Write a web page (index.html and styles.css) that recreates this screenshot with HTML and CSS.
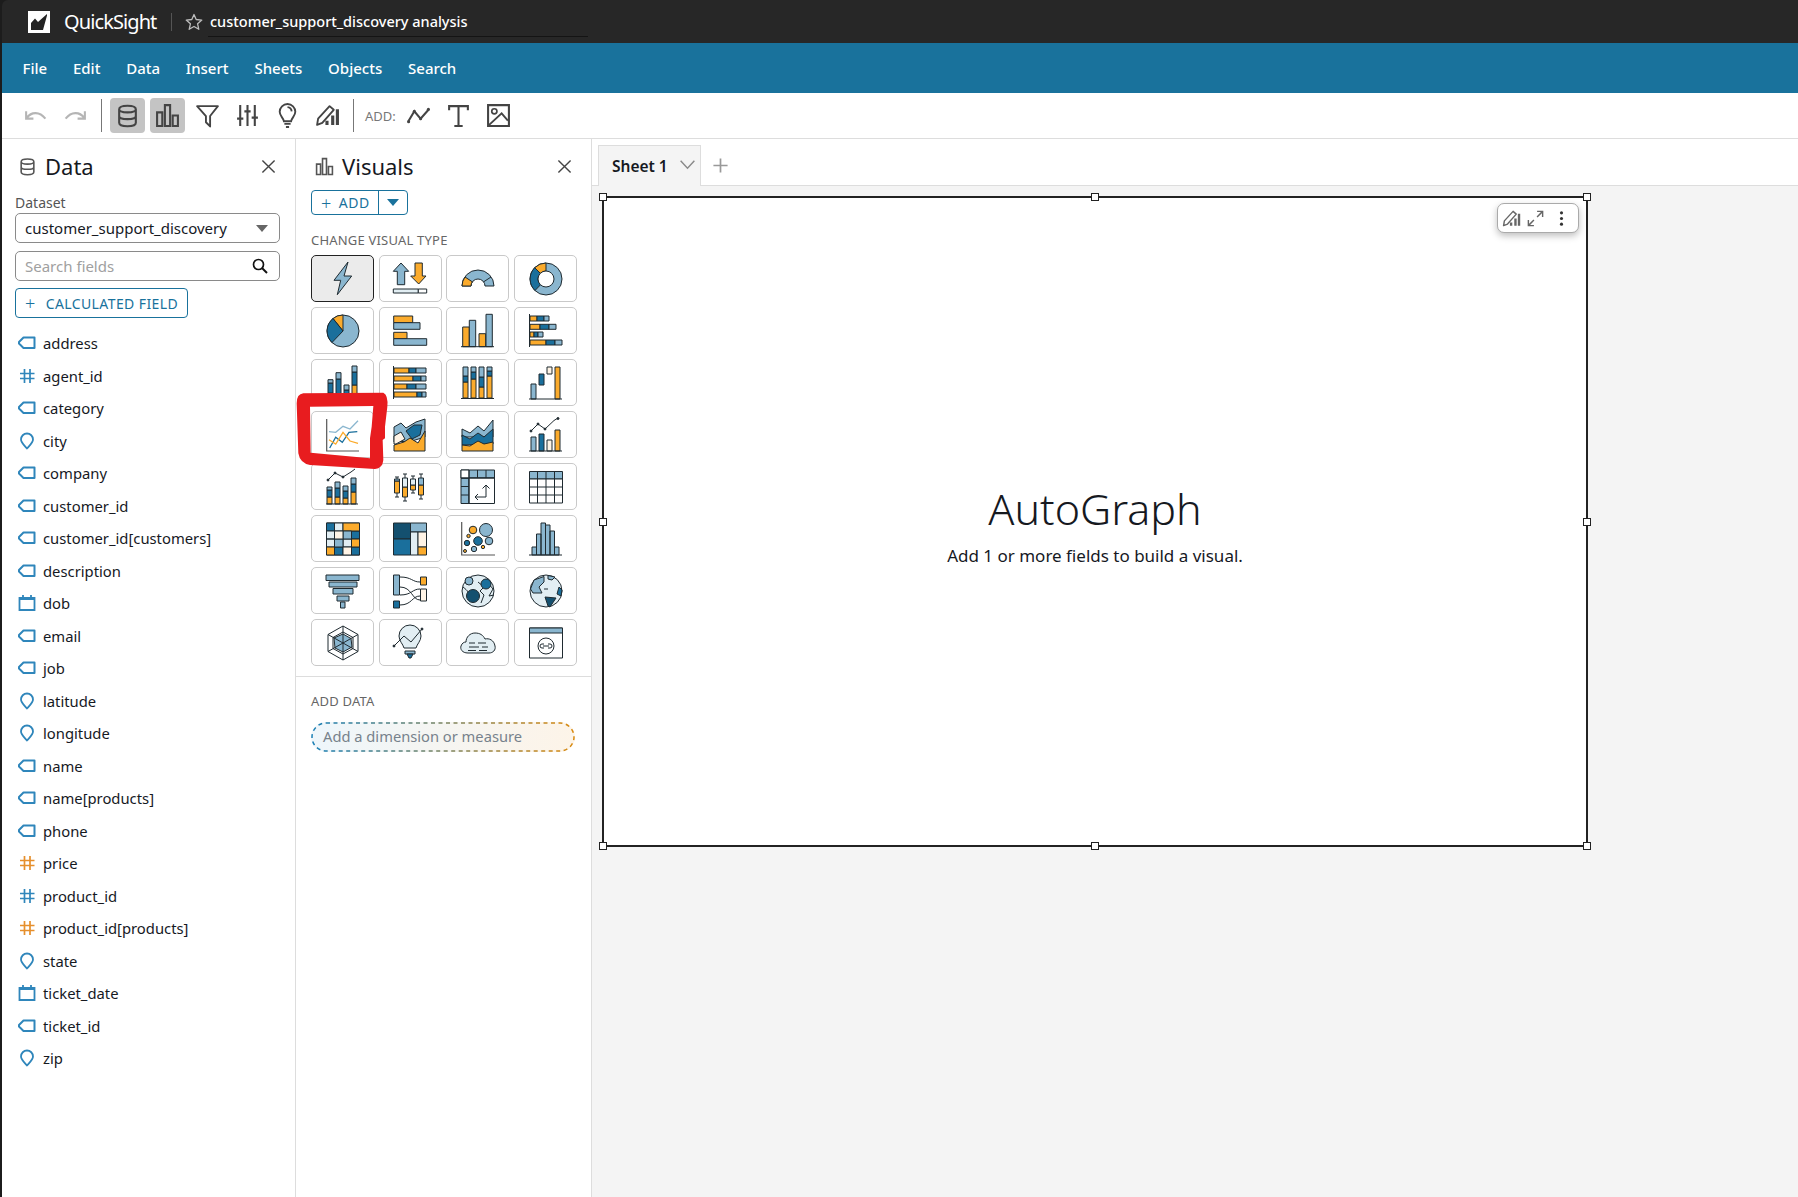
FILE: index.html
```html
<!DOCTYPE html>
<html lang="en">
<head>
<meta charset="utf-8">
<title>QuickSight</title>
<link rel="stylesheet" href="styles.css">
</head>
<body>
<svg class="defs" width="0" height="0" aria-hidden="true">
  <defs><linearGradient id="wellgrad" x1="0" x2="1" y1="0" y2="0"><stop offset="0" stop-color="#1a7fb5"/><stop offset="1" stop-color="#d98a10"/></linearGradient></defs>
  <symbol id="f-tag" viewBox="0 0 18 18"><path d="M5.5 3.5H16.5V14H5.5L1 9.5V8Z" fill="none" stroke="currentColor" stroke-width="2" stroke-linejoin="round"/></symbol>
  <symbol id="f-hash" viewBox="0 0 18 18"><path d="M6.5 2V16M12 2V16M2 6.5H16.5M2 11.5H16.5" fill="none" stroke="currentColor" stroke-width="1.7"/></symbol>
  <symbol id="f-pin" viewBox="0 0 18 18"><path d="M9 16.5C5.5 12.5 3 10.500 3 7.500A6 6 0 0 1 15 7.500C15 10.500 12.500 12.500 9 16.500Z" fill="none" stroke="currentColor" stroke-width="1.800" stroke-linejoin="round"/></symbol>
  <symbol id="f-cal" viewBox="0 0 18 18"><path d="M1.500 4H16.500V16H1.500ZM5 1V4M13 1V4M1.500 5H16.500" fill="none" stroke="currentColor" stroke-width="1.800"/></symbol>
  <symbol id="t-db" viewBox="0 0 24 24"><path d="M4 6C4 1.500 20 1.500 20 6V19C20 23.500 4 23.500 4 19ZM4 6C4 10 20 10 20 6M4 12.500C4 16.500 20 16.500 20 12.500" fill="none" stroke="currentColor" stroke-width="2"/></symbol>
  <symbol id="t-bars" viewBox="0 0 24 24"><path d="M2 9H7V22H2ZM9.500 2H14.500V22H9.500ZM17 12H22V22H17Z" fill="none" stroke="currentColor" stroke-width="2"/></symbol>
  <symbol id="t-design" viewBox="0 0 24 24"><path d="M2 21L3 15L14 3L18 6.500L7 19Z" fill="none" stroke="currentColor" stroke-width="1.800" stroke-linejoin="round"/><path d="M10 21H13V17H10ZM15.500 21H18.500V12H15.500ZM20 21H23V6H20Z" fill="currentColor"/></symbol>
</svg>

<div class="app">
  <header class="topbar">
    <svg class="logo" viewBox="0 0 22 22"><path fill="#fff" d="M0 0H22V22H0Z"/><path fill="#232323" d="M3 19V12L7 7.500L10 11L19 3V4.500L15 19Z"/></svg>
    <span class="brand">QuickSight</span>
    <span class="vsep"></span>
    <svg class="star" viewBox="0 0 18 18"><path d="M9 1.500L11.200 6.500L16.800 7.100L12.600 10.800L13.800 16.300L9 13.500L4.200 16.300L5.400 10.800L1.200 7.100L6.800 6.500Z" fill="none" stroke="#bdbdbd" stroke-width="1.300" stroke-linejoin="round"/></svg>
    <div class="doc-title">customer_support_discovery analysis</div>
  </header>

  <nav class="menubar">
    <span>File</span><span>Edit</span><span>Data</span><span>Insert</span><span>Sheets</span><span>Objects</span><span>Search</span>
  </nav>

  <div class="toolbar">
    <span class="tb muted"><svg viewBox="0 0 24 24"><path d="M3 8V15H10M3.500 14.500C8 8 16 8 21.500 15" fill="none" stroke="currentColor" stroke-width="2"/></svg></span>
    <span class="tb muted"><svg viewBox="0 0 24 24"><path d="M21 8V15H14M20.500 14.500C16 8 8 8 2.500 15" fill="none" stroke="currentColor" stroke-width="2"/></svg></span>
    <span class="tsep"></span>
    <span class="tb on"><svg viewBox="0 0 24 24"><use href="#t-db"/></svg></span>
    <span class="tb on"><svg viewBox="0 0 24 24"><use href="#t-bars"/></svg></span>
    <span class="tb"><svg viewBox="0 0 24 24"><path d="M2 3H22L14.500 12.500V22.500L10.500 18.500V12.500Z" fill="none" stroke="currentColor" stroke-width="1.800" stroke-linejoin="round"/></svg></span>
    <span class="tb"><svg viewBox="0 0 24 24"><path d="M5 2V22M12 2V22M19 2V22M2 15H8M9 8H15M16 14H22" fill="none" stroke="currentColor" stroke-width="2"/></svg></span>
    <span class="tb"><svg viewBox="0 0 24 24"><path d="M8.500 17.500C8 14 4.500 12.500 4.500 8.500A7.500 7.500 0 0 1 19.500 8.500C19.500 12.500 16 14 15.500 17.500ZM9 20H15M10.500 23H13.500M12 4A4.500 4.500 0 0 1 16 8" fill="none" stroke="currentColor" stroke-width="1.800"/></svg></span>
    <span class="tb"><svg viewBox="0 0 24 24"><use href="#t-design"/></svg></span>
    <span class="tsep"></span>
    <span class="addlabel">ADD:</span>
    <span class="tb"><svg viewBox="0 0 24 24"><path d="M2 18L8 8L14 15L22 6" fill="none" stroke="currentColor" stroke-width="2"/><circle cx="2.500" cy="18" r="1.500" fill="currentColor"/><circle cx="8" cy="8" r="1.500" fill="currentColor"/><circle cx="14" cy="15" r="1.500" fill="currentColor"/><circle cx="21.500" cy="6" r="1.500" fill="currentColor"/></svg></span>
    <span class="tb"><svg viewBox="0 0 24 24"><path d="M3 7V3H21V7M12 3V22M8 22H16" fill="none" stroke="currentColor" stroke-width="2"/></svg></span>
    <span class="tb"><svg viewBox="0 0 24 24"><path d="M2 2H22V22H2Z" fill="none" stroke="currentColor" stroke-width="2"/><circle cx="8" cy="8" r="2.500" fill="none" stroke="currentColor" stroke-width="1.600"/><path d="M3 21L15 10L21 17" fill="none" stroke="currentColor" stroke-width="1.800"/></svg></span>
  </div>

  <main class="workspace">
    <aside class="panel data">
      <div class="panel-head">
        <svg class="head-icon" viewBox="0 0 24 24"><use href="#t-db"/></svg>
        <h2>Data</h2>
        <svg class="close" viewBox="0 0 16 16"><path d="M1.500 1.500L14.500 14.500M14.500 1.500L1.500 14.500" stroke="currentColor" stroke-width="1.500"/></svg>
      </div>
      <label class="ds-label">Dataset</label>
      <div class="select"><span>customer_support_discovery</span><i class="caret"></i></div>
      <div class="search"><span>Search fields</span>
        <svg viewBox="0 0 16 16"><circle cx="6.500" cy="6.500" r="5" fill="none" stroke="#111" stroke-width="1.700"/><path d="M10 10L15 15" stroke="#111" stroke-width="2"/></svg>
      </div>
      <div class="calc"><span class="plus">+</span>CALCULATED FIELD</div>
      <ul class="fields">
        <li><svg><use href="#f-tag"/></svg>address</li>
        <li><svg><use href="#f-hash"/></svg>agent_id</li>
        <li><svg><use href="#f-tag"/></svg>category</li>
        <li><svg><use href="#f-pin"/></svg>city</li>
        <li><svg><use href="#f-tag"/></svg>company</li>
        <li><svg><use href="#f-tag"/></svg>customer_id</li>
        <li><svg><use href="#f-tag"/></svg>customer_id[customers]</li>
        <li><svg><use href="#f-tag"/></svg>description</li>
        <li><svg><use href="#f-cal"/></svg>dob</li>
        <li><svg><use href="#f-tag"/></svg>email</li>
        <li><svg><use href="#f-tag"/></svg>job</li>
        <li><svg><use href="#f-pin"/></svg>latitude</li>
        <li><svg><use href="#f-pin"/></svg>longitude</li>
        <li><svg><use href="#f-tag"/></svg>name</li>
        <li><svg><use href="#f-tag"/></svg>name[products]</li>
        <li><svg><use href="#f-tag"/></svg>phone</li>
        <li class="measure"><svg><use href="#f-hash"/></svg>price</li>
        <li><svg><use href="#f-hash"/></svg>product_id</li>
        <li class="measure"><svg><use href="#f-hash"/></svg>product_id[products]</li>
        <li><svg><use href="#f-pin"/></svg>state</li>
        <li><svg><use href="#f-cal"/></svg>ticket_date</li>
        <li><svg><use href="#f-tag"/></svg>ticket_id</li>
        <li><svg><use href="#f-pin"/></svg>zip</li>
      </ul>
    </aside>

    <aside class="panel visuals">
      <div class="panel-head">
        <svg class="head-icon" viewBox="0 0 24 24"><use href="#t-bars"/></svg>
        <h2>Visuals</h2>
        <svg class="close" viewBox="0 0 16 16"><path d="M1.500 1.500L14.500 14.500M14.500 1.500L1.500 14.500" stroke="currentColor" stroke-width="1.500"/></svg>
      </div>
      <div class="addbtn"><span class="addmain"><span class="plus">+</span>ADD</span><span class="addcaret"><i></i></span></div>
      <h3 class="section">CHANGE VISUAL TYPE</h3>
      <div class="vgrid">
        <div class="vt sel"><svg viewBox="0 0 36 36"><path class="b" d="M23 1L9 19.300H15.700L12.300 33.700L26.700 15H19Z"/></svg></div>
        <div class="vt"><svg viewBox="0 0 36 36"><path class="b" d="M9 2L1.300 10.300H5.300V23.700H12.700V10.300H16.700Z"/><path class="o" d="M23 2H30.300V15H34L26.700 23L18.700 15H23Z"/><path class="p" d="M1.300 28H26.300V32H1.300Z"/><path class="w" d="M26.300 28H34.700V32H26.300Z"/></svg></div>
        <div class="vt"><svg viewBox="0 0 36 36"><path class="b" d="M2 25A16 16 0 0 1 34 25H25A7 7 0 0 0 11 25Z"/><path class="o" d="M2 25A16 16 0 0 1 5 16L12.300 20.800A7 7 0 0 0 11 25Z"/><path class="ln" d="M31 16L23.700 20.800"/></svg></div>
        <div class="vt"><svg viewBox="0 0 36 36"><circle class="b" cx="18" cy="18" r="16"/><path class="o" d="M18 2A16 16 0 0 0 6.700 6.700L12.300 12.300A8 8 0 0 1 18 10Z"/><path class="d" d="M6.700 6.700A16 16 0 0 0 7 29.500L12.500 23.800A8 8 0 0 1 12.300 12.300Z"/><circle class="w" cx="18" cy="18" r="8"/></svg></div>

        <div class="vt"><svg viewBox="0 0 36 36"><circle class="b" cx="18" cy="18" r="16"/><path class="o" d="M18 18V2A16 16 0 0 0 8 5.500Z"/><path class="d" d="M18 18L8 5.500A16 16 0 0 0 7 29.500Z"/></svg></div>
        <div class="vt"><svg viewBox="0 0 36 36"><path class="o" d="M1.700 3H20.700V9.700H1.700Z"/><path class="b" d="M1.700 9.700H28V16.300H1.700Z"/><path class="o" d="M1.700 19.300H15V25.700H1.700Z"/><path class="b" d="M1.700 25.700H34.700V32.300H1.700Z"/></svg></div>
        <div class="vt"><svg viewBox="0 0 36 36"><path class="o" d="M2.700 14H9.300V33.700H2.700Z"/><path class="b" d="M9.300 7.300H15.700V33.700H9.300Z"/><path class="o" d="M19 20.700H25.700V33.700H19Z"/><path class="b" d="M26 1.300H32.300V33.700H26Z"/><path class="ln" d="M1 33.700H34"/></svg></div>
        <div class="vt"><svg viewBox="0 0 36 36"><path class="o" d="M2 3H9V8H2Z"/><path class="d" d="M9 3H16V8H9Z"/><path class="b" d="M16 3H21V8H16Z"/><path class="o" d="M2 11.300H12V16.300H2Z"/><path class="d" d="M12 11.300H21V16.300H12Z"/><path class="b" d="M21 11.300H28V16.300H21Z"/><path class="o" d="M2 19H6V24H2Z"/><path class="d" d="M6 19H10V24H6Z"/><path class="b" d="M10 19H15V24H10Z"/><path class="o" d="M2 27H18V32H2Z"/><path class="d" d="M18 27H27V32H18Z"/><path class="b" d="M27 27H34V32H27Z"/><path class="ln" d="M1.500 1V34"/></svg></div>

        <div class="vt"><svg viewBox="0 0 36 36"><path class="o" d="M3 28H8V34H3Z"/><path class="d" d="M3 18H8V28H3Z"/><path class="b" d="M3 14.700H8V18H3Z"/><path class="o" d="M11 29H16V34H11Z"/><path class="d" d="M11 14H16V29H11Z"/><path class="b" d="M11 7.700H16V14H11Z"/><path class="d" d="M19 25H24V34H19Z"/><path class="b" d="M19 20H24V25H19Z"/><path class="o" d="M27 20H32V34H27Z"/><path class="d" d="M27 7H32V20H27Z"/><path class="b" d="M27 1H32V7H27Z"/><path class="ln" d="M1 34H34"/></svg></div>
        <div class="vt"><svg viewBox="0 0 36 36"><path class="o" d="M2 3H17V8H2Z"/><path class="d" d="M17 3H24V8H17Z"/><path class="b" d="M24 3H34V8H24Z"/><path class="o" d="M2 11H21V16H2Z"/><path class="d" d="M21 11H29V16H21Z"/><path class="b" d="M29 11H34V16H29Z"/><path class="o" d="M2 19H15V24H2Z"/><path class="d" d="M15 19H24V24H15Z"/><path class="b" d="M24 19H34V24H24Z"/><path class="o" d="M2 27H25V32H2Z"/><path class="d" d="M25 27H30V32H25Z"/><path class="b" d="M30 27H34V32H30Z"/><path class="ln" d="M1.500 1V34"/></svg></div>
        <div class="vt"><svg viewBox="0 0 36 36"><path class="o" d="M3 17H8V33H3Z"/><path class="d" d="M3 11H8V17H3Z"/><path class="b" d="M3 2H8V11H3Z"/><path class="o" d="M11 14H16V33H11Z"/><path class="d" d="M11 7H16V14H11Z"/><path class="b" d="M11 2H16V7H11Z"/><path class="o" d="M19 22H24V33H19Z"/><path class="d" d="M19 12H24V22H19Z"/><path class="b" d="M19 2H24V12H19Z"/><path class="o" d="M27 11H32V33H27Z"/><path class="d" d="M27 6H32V11H27Z"/><path class="b" d="M27 2H32V6H27Z"/><path class="ln" d="M1 33.500H34"/></svg></div>
        <div class="vt"><svg viewBox="0 0 36 36"><path class="b" d="M3 19H8V34H3Z"/><path class="d" d="M11 9H16V20H11Z"/><path class="c" d="M19 2H24V9H19Z"/><path class="o" d="M27 2H32V34H27Z"/><path class="ln" d="M1 34H34"/></svg></div>

        <div class="vt"><svg viewBox="0 0 36 36"><path class="axis" d="M1.700 2V34H34"/><path class="lb" d="M4 14.700L10.700 15.300L18 9.300L25 12L33 3.700"/><path class="ld" d="M4.700 31L10.700 20.300L17.300 25.300L24 15.300L32.300 14.700"/><path class="lo" d="M4 22.700L10.700 27L18 15.300L25 24L33 26.300"/></svg></div>
        <div class="vt"><svg viewBox="0 0 36 36"><path class="b" d="M2 10L9 6L14 11L24 5L33 2V20L20 24L2 25Z"/><path class="c" d="M2 19L9 15L13 22L4 27L2 27Z"/><path class="o" d="M2 28L12 25L18 21L26 26L33 14V34H2Z"/><path class="d" d="M14 14L22 8L30 8L28 18L20 22Z"/></svg></div>
        <div class="vt"><svg viewBox="0 0 36 36"><path class="b" d="M2 12L10 16L18 9L24 14L33 3V20H2Z"/><path class="d" d="M2 18L10 22L18 16L24 20L33 12V27L2 28Z"/><path class="o" d="M2 28L10 29L18 24L24 27L33 25V34H2Z"/></svg></div>
        <div class="vt"><svg viewBox="0 0 36 36"><path class="b" d="M3 20H8V34H3Z"/><path class="d" d="M11 17H16V34H11Z"/><path class="c" d="M19 23H24V34H19Z"/><path class="o" d="M27 13H32V34H27Z"/><path class="ln" d="M1 34H34"/><path class="ln" d="M3 14L10 7L17 12L26 3.500L30 1"/><circle class="dot" cx="3" cy="14" r="1"/><circle class="dot" cx="10" cy="7" r="1"/><circle class="dot" cx="17" cy="12" r="1"/><circle class="dot" cx="30" cy="1.500" r="1"/></svg></div>

        <div class="vt"><svg viewBox="0 0 36 36"><path class="o" d="M2 28H7V35H2Z"/><path class="d" d="M2 21H7V28H2Z"/><path class="b" d="M2 18H7V21H2Z"/><path class="o" d="M10 28H15V35H10Z"/><path class="d" d="M10 19H15V28H10Z"/><path class="b" d="M10 13H15V19H10Z"/><path class="o" d="M18 29H23V35H18Z"/><path class="d" d="M18 22H23V29H18Z"/><path class="b" d="M18 17H23V22H18Z"/><path class="o" d="M26 23H31V35H26Z"/><path class="d" d="M26 15H31V23H26Z"/><path class="b" d="M26 9H31V15H26Z"/><path class="ln" d="M1 35H33M3 11L10 4L18 8L26 3L30 0"/><circle class="dot" cx="3" cy="11" r="1"/><circle class="dot" cx="10" cy="4" r="1"/><circle class="dot" cx="18" cy="8" r="1"/></svg></div>
        <div class="vt"><svg viewBox="0 0 36 36"><path class="ln" d="M5 8V28M3 8H7M3 28H7M13 5V32M11 5H15M11 32H15M21 7V24M19 7H23M19 24H23M29 5V30M27 5H31M27 30H31"/><path class="o" d="M2.500 12H7.500V24H2.500Z"/><path class="b" d="M2.500 10H7.500V12H2.500Z"/><path class="o" d="M10.500 18H15.500V28H10.500Z"/><path class="p" d="M10.500 9H15.500V18H10.500Z"/><path class="o" d="M18.500 16H23.500V21H18.500Z"/><path class="p" d="M18.500 10H23.500V16H18.500Z"/><path class="o" d="M26.500 16H31.500V26H26.500Z"/><path class="b" d="M26.500 9H31.500V16H26.500Z"/></svg></div>
        <div class="vt"><svg viewBox="0 0 36 36"><path class="b" d="M1 1H34.500V9H1ZM1 9H9V34.500H1Z"/><path class="w" d="M1 1H9V9H1ZM9 9H34.500V34.500H9Z"/><path class="ln" d="M9 1V34.500M17.500 1V9M26 1V9M1 9H34.500M1 17.500H9M1 26H9"/><path class="ln" d="M15 28H26V16M22.500 19.500L26 16L29.500 19.500M18 25L15 28L18 31"/></svg></div>
        <div class="vt"><svg viewBox="0 0 36 36"><path class="b" d="M1.500 2.500H34.500V10H1.500Z"/><path class="w" d="M1.500 10H34.500V34H1.500Z"/><path class="ln" d="M1.500 18H34.500M1.500 26H34.500M9.500 2.500V34M18 2.500V34M26.500 2.500V34"/></svg></div>

        <div class="vt"><svg viewBox="0 0 36 36"><path class="w" d="M1.500 2H34.500V34H1.500Z"/><path class="d" d="M1.500 2H9.500V10H1.500ZM26.500 10H34.500V18H26.500ZM9.500 26H18V34H9.500ZM26.500 26H34.500V34H26.500Z"/><path class="p" d="M9.500 2H18V10H9.500ZM1.500 10H9.500V18H1.500ZM1.500 18H9.500V26H1.500ZM18 18H26.500V26H18Z"/><path class="o" d="M18 2H34.500V10H18ZM26.500 18H34.500V26H26.500ZM1.500 26H9.500V34H1.500Z"/><path class="b" d="M18 10H26.500V18H18ZM9.500 18H18V26H9.500Z"/><path class="c" d="M9.500 10H18V18H9.500ZM18 26H26.500V34H18Z"/></svg></div>
        <div class="vt"><svg viewBox="0 0 36 36"><path class="n" d="M1.500 2H18.500V18H1.500Z"/><path class="d" d="M1.500 18H18.500V34H1.500Z"/><path class="b" d="M18.500 2H34.500V11H18.500Z"/><path class="p" d="M18.500 11H26V34H18.500Z"/><path class="c" d="M26 11H34.500V26H26Z"/><path class="o" d="M26 26H34.500V34H26Z"/></svg></div>
        <div class="vt"><svg viewBox="0 0 36 36"><path class="axis" d="M1.700 1V34H35"/><circle class="b" cx="26" cy="9" r="6.500"/><circle class="o" cx="13" cy="9" r="3.800"/><circle class="o" cx="8.500" cy="15" r="1.700"/><circle class="d" cx="18" cy="20" r="4.300"/><circle class="b" cx="29" cy="20" r="3.800"/><circle class="d" cx="7" cy="22" r="2.700"/><circle class="b" cx="14" cy="28" r="2.700"/><circle class="o" cx="23" cy="26" r="1.700"/><circle class="o" cx="5" cy="30" r="1.500"/></svg></div>
        <div class="vt"><svg viewBox="0 0 36 36"><path class="b" d="M4 26H8.500V34H4ZM8.500 13H13V34H8.500ZM13 2H17.500V34H13ZM17.500 4H22V34H17.500ZM22 10H26.500V34H22ZM26.500 26H31V34H26.500Z"/><path class="ln" d="M1 34H34"/></svg></div>

        <div class="vt"><svg viewBox="0 0 36 36"><path class="b" d="M1 2H34V7.500H1ZM4 9H32V14H4ZM8 15.500H28V21H8ZM12 23H24V28H12ZM15.500 29H20V35H15.500Z"/></svg></div>
        <div class="vt"><svg viewBox="0 0 36 36"><path class="ln" d="M8 4C20 4 20 9 28 9M8 14C20 14 20 27 28 27M8 22C20 22 20 16 28 16M8 32C20 32 20 23 28 23"/><path class="b" d="M1.500 2H7.500V22H1.500Z"/><path class="d" d="M1.500 28H7.500V35H1.500Z"/><path class="o" d="M28.500 4H34.500V12H28.500Z"/><path class="c" d="M28.500 16H34.500V28H28.500Z"/></svg></div>
        <div class="vt"><svg viewBox="0 0 36 36"><circle class="p" cx="18" cy="18" r="16"/><path class="ln" d="M3 14C8 18 10 20 8 24M18 9L24 14L20 18L24 22L21 30M28 10L33 16L29 23L34 22"/><circle class="b" cx="9" cy="8" r="4"/><circle class="d" cx="26" cy="11" r="5"/><circle class="n" cx="13" cy="23" r="6.500"/></svg></div>
        <div class="vt"><svg viewBox="0 0 36 36"><circle class="p" cx="18" cy="18" r="16"/><path class="b" d="M6 7L16 3.500L16 9L11 14L14 20L5 20L2.500 16Z"/><path class="n" d="M17 24L28 25L22 34L20 33Z"/><path class="d" d="M31 14L34 17L33 23L29 21Z"/><path class="b" d="M20 2.500L27 4L24 7L20 6Z"/><path class="ln" d="M16 16H20"/></svg></div>

        <div class="vt"><svg viewBox="0 0 36 36"><path class="w" d="M18 1L33 9.500V26.500L18 35L3 26.500V9.500Z"/><path class="ln" d="M18 7L28 12.500V23.500L18 29L8 23.500V12.500Z"/><path class="b" d="M18 9L26 13.500L27 22L18 27L10 23L9 13Z"/><path class="ln" d="M18 1V35M3 9.500L33 26.500M33 9.500L3 26.500"/></svg></div>
        <div class="vt"><svg viewBox="0 0 36 36"><path class="p" d="M12 23C11 19 7 16 7 11A11 11 0 0 1 29 11C29 16 25 19 24 23Z"/><path class="b" d="M13 26H23V29H13Z"/><path class="d" d="M15 29H21L19 33H17Z"/><path class="ln" d="M2 21L12 11L19 17L30 4"/><circle class="dot" cx="2" cy="21" r="1"/><circle class="dot" cx="30" cy="4" r="1"/></svg></div>
        <div class="vt"><svg viewBox="0 0 36 36"><path class="p" d="M8 28C2 28 0 24 1 21C2 18 4 17 6 17C6 12 10 8 15 8C20 8 23 10 25 14C29 13 34 15 35 21C36 25 33 28 29 28Z"/><path class="ln" d="M9 18H15M18 18H26M9 22H19M22 22H28M8 25.500H16M19 25.500H27"/></svg></div>
        <div class="vt"><svg viewBox="0 0 36 36"><path class="w" d="M1.500 3H34.500V33H1.500Z"/><path class="b" d="M1.500 3H34.500V8H1.500Z"/><circle class="w" cx="18" cy="21" r="8"/><path class="ln" d="M16 19H14A2 2 0 0 0 14 23H16M20 19H22A2 2 0 0 1 22 23H20M15 21H21"/></svg></div>
      </div>
      <div class="divider"></div>
      <h3 class="section add-data">ADD DATA</h3>
      <div class="well"><svg class="well-line" viewBox="0 0 264 30" preserveAspectRatio="none"><rect x="1" y="1" width="262" height="28" rx="14" fill="none" stroke="url(#wellgrad)" stroke-width="1.500" stroke-dasharray="4 3.500"/></svg>Add a dimension or measure</div>
    </aside>

    <section class="canvas">
      <div class="tabs">
        <div class="tab"><b>Sheet 1</b>
          <svg viewBox="0 0 18 12"><path d="M1.500 2L9 10L16.500 2" fill="none" stroke="#8a8a8a" stroke-width="1.600"/></svg>
        </div>
        <svg class="addtab" viewBox="0 0 18 18"><path d="M9 1.500V16.500M1.500 9H16.500" stroke="#999" stroke-width="1.800"/></svg>
      </div>
      <div class="sheet">
        <div class="visual">
          <i class="h tl"></i><i class="h tc"></i><i class="h tr"></i><i class="h ml"></i><i class="h mr"></i><i class="h bl"></i><i class="h bc"></i><i class="h br"></i>
          <div class="vtools">
            <svg viewBox="0 0 24 24"><use href="#t-design"/></svg>
            <svg viewBox="0 0 24 24"><path d="M14 3H21V10M21 3L14 10M3 14V21H10M3 21L10 14" fill="none" stroke="currentColor" stroke-width="1.800"/></svg>
            <svg class="dots" viewBox="0 0 8 24"><circle cx="4" cy="4" r="2.200" fill="currentColor"/><circle cx="4" cy="12" r="2.200" fill="currentColor"/><circle cx="4" cy="20" r="2.200" fill="currentColor"/></svg>
          </div>
          <div class="v-title">AutoGraph</div>
          <div class="v-sub">Add 1 or more fields to build a visual.</div>
        </div>
      </div>
    </section>
  </main>

  <svg class="annotation" viewBox="0 0 900 750"><path fill-rule="evenodd" fill="#e81c1f" d="M40 490L280 488Q295 495 292 530L285 590L285 625L278 630L280 690Q278 715 255 717L60 705Q30 700 25 670L20 520Q20 492 40 490ZM60 530L250 528L245 590L240 625L240 685L62 668Z"/></svg>
</div>
</body>
</html>
```

FILE: styles.css
```css
* { box-sizing: border-box; }
html, body { margin: 0; height: 100%; }
body { font-family: "Noto Sans", "Open Sans", sans-serif; background: #1c1c1c; color: #16191f; overflow: hidden; }
.defs { position: absolute; }
.app { position: relative; height: 1197px; width: 1798px; padding-left: 2px; display: flex; flex-direction: column; background: #1c1c1c; overflow: hidden; }

.topbar { height: 43px; flex: none; display: flex; align-items: center; padding-left: 26px; background: #272727; color: #fff; border-top-left-radius: 6px; }
.logo { width: 22px; height: 22px; flex: none; }
.brand { margin-left: 14px; font-size: 20px; letter-spacing: -0.9px; width: 92px; white-space: nowrap; }
.vsep { width: 1px; height: 18px; background: #555; margin-left: 15px; }
.star { width: 18px; height: 18px; margin-left: 13px; }
.doc-title { margin-left: 5px; width: 380px; height: 29px; padding: 3px 0 0 2px; margin-top: 1px; border-bottom: 1px solid #141414; font-size: 14.500px; font-weight: 500; white-space: nowrap; }

.menubar { height: 50px; flex: none; background: #19729c; color: #fff; display: flex; align-items: center; gap: 25.800px; padding-left: 20.500px; font-size: 15px; font-weight: 500; }

.toolbar { height: 46px; flex: none; background: #fff; border-bottom: 1px solid #ddd; display: flex; align-items: center; padding-left: 16px; gap: 5px; color: #444; }
.tb { width: 35px; height: 35px; display: flex; align-items: center; justify-content: center; border-radius: 4px; color: #444; }
.tb svg { width: 25px; height: 25px; }
.tb.muted { color: #b5b5b5; }
.tb.on { background: #c4c4c4; }
.tsep { width: 1px; height: 33px; background: #777; margin: 0 3px; }
.addlabel { font-size: 13px; color: #777; width: 31px; margin-left: 3px; }

.workspace { flex: 1; min-height: 0; display: flex; background: #fff; }
.panel { width: 294px; flex: none; background: #fff; border-right: 1px solid #ddd; padding: 0 13px; }
.panel.visuals { width: 296px; padding: 0 15px; }
.panel-head { height: 48px; display: flex; align-items: center; gap: 8px; margin-top: 3px; }
.head-icon { width: 19px; height: 19px; color: #555; margin-left: 3px; }
.visuals .head-icon { margin-left: 4px; }
.panel-head h2 { margin: 0; font-size: 22px; font-weight: 400; flex: 1; }
.close { width: 15px; height: 15px; color: #444; margin-right: 6px; }
.visuals .close { margin-right: 4px; }
.ds-label { display: block; font-size: 14px; color: #555; line-height: 20px; margin-top: 3px; }
.select, .search { height: 30px; border: 1px solid #8a8a8a; border-radius: 5px; display: flex; align-items: center; justify-content: space-between; padding: 0 11px 0 9px; font-size: 15px; width: 265px; }
.caret { width: 0; height: 0; border: 6px solid transparent; border-top: 7px solid #666; border-bottom: 0; }
.search { margin-top: 8px; color: #a0a0a0; }
.search svg { width: 16px; height: 16px; }
.calc { margin-top: 7px; width: 173px; height: 30px; border: 1px solid #19729c; border-radius: 4px; color: #19729c; font-size: 14px; letter-spacing: 0.4px; display: flex; align-items: center; padding-left: 9px; white-space: nowrap; }
.plus { font-size: 18px; line-height: 1; margin-right: 10px; font-weight: 300; }
.fields { list-style: none; margin: 9px 0 0; padding: 0; }
.fields li { height: 32.500px; display: flex; align-items: center; gap: 7px; font-size: 14.800px; padding-left: 3px; color: #16191f; }
.fields svg { width: 18px; height: 18px; color: #2f86bb; flex: none; }
.fields .measure svg { color: #e68f2c; }

.addbtn { display: flex; height: 25px; width: 97px; border: 1px solid #19729c; border-radius: 4px; color: #19729c; font-size: 14px; }
.addmain { width: 67px; border-right: 1px solid #19729c; display: flex; align-items: center; padding-left: 9px; letter-spacing: 0.5px; }
.addmain .plus { margin-right: 7px; }
.addcaret { flex: 1; display: flex; align-items: center; justify-content: center; }
.addcaret i { width: 0; height: 0; border: 6px solid transparent; border-top: 7px solid #19729c; border-bottom: 0; }
.section { margin: 0; font-size: 13px; font-weight: 400; color: #666; letter-spacing: 0.2px; line-height: 18px; }
.visuals > .section { margin-top: 16px; }
.vgrid { display: grid; grid-template-columns: repeat(4, 63px); grid-auto-rows: 47px; gap: 5px 4.700px; margin-top: 6px; }
.vt { border: 1px solid #c9c9c9; border-radius: 5px; display: flex; align-items: center; justify-content: center; background: #fff; }
.vt.sel { background: #ebebeb; border-color: #222; }
.vt svg { width: 36px; height: 36px; overflow: visible; }
.vt path, .vt circle { stroke: #1f2a30; stroke-width: 1; }
.o { fill: #fbab2c; } .b { fill: #8ab6cf; } .d { fill: #1a6f9c; } .n { fill: #14506f; }
.p { fill: #e2eef3; } .c { fill: #fff4e6; } .w { fill: #fff; }
.ln, .axis, .lb, .ld, .lo { fill: none; }
.vt .axis { stroke: #555; stroke-width: 1.200; }
.vt .lb { stroke: #8ab6cf; stroke-width: 1.300; }
.vt .ld { stroke: #1a6f9c; stroke-width: 1.300; }
.vt .lo { stroke: #fbab2c; stroke-width: 1.300; }
.dot { fill: #1f2a30; }
.divider { height: 1px; background: #ddd; margin: 10px -15px 0; }
.visuals > .section.add-data { margin-top: 15px; }
.well { position: relative; margin-top: 12px; width: 264px; height: 30px; border-radius: 15px; background: linear-gradient(90deg, #eef6fb, #fdf4e8); font-size: 14.700px; color: #77828c; padding-left: 12px; line-height: 28px; white-space: nowrap; }
.well-line { position: absolute; left: 0; top: 0; width: 264px; height: 30px; }

.canvas { flex: 1; min-width: 0; background: #f4f4f4; display: flex; flex-direction: column; }
.tabs { height: 47px; flex: none; background: #fff; border-bottom: 1px solid #ddd; display: flex; align-items: flex-start; padding-left: 6px; }
.tab { width: 103px; height: 41px; margin-top: 6px; background: #f4f4f4; border: 1px solid #ddd; border-bottom: 0; display: flex; align-items: center; padding-left: 13px; gap: 11px; font-size: 15.500px; white-space: nowrap; }
.tab b { font-weight: 600; }
.tab svg { width: 17px; height: 11px; flex: none; margin-top: -4px; }
.addtab { width: 17px; height: 17px; margin: 18px 0 0 11px; }
.sheet { padding: 10px 0 0 10px; }
.visual { position: relative; width: 986px; height: 651px; background: #fff; border: 2px solid #222; display: flex; flex-direction: column; align-items: center; justify-content: center; padding-top: 5px; }
.v-title { font-size: 43px; font-weight: 300; color: #16191f; line-height: 58px; }
.v-sub { font-size: 17px; color: #16191f; margin-top: 6px; line-height: 24px; }
.h { position: absolute; width: 8px; height: 8px; background: #fff; border: 1.500px solid #222; }
.tl, .tc, .tr { top: -5px; } .ml, .mr { top: calc(50% - 4px); } .bl, .bc, .br { bottom: -5px; }
.tl, .ml, .bl { left: -5px; } .tc, .bc { left: calc(50% - 4px); } .tr, .mr, .br { right: -5px; }
.vtools { position: absolute; top: 5px; right: 7px; width: 82px; height: 30px; background: #fff; border: 1px solid #aaa; border-radius: 7px; box-shadow: 0 3px 7px rgba(0,0,0,.25); display: flex; align-items: center; padding-left: 4px; gap: 5px; color: #666; }
.vtools svg { width: 19px; height: 19px; }
.vtools .dots { width: 7px; height: 17px; margin-left: 8px; color: #333; }

.annotation { position: absolute; left: 290px; top: 230px; width: 300px; height: 250px; }
```
